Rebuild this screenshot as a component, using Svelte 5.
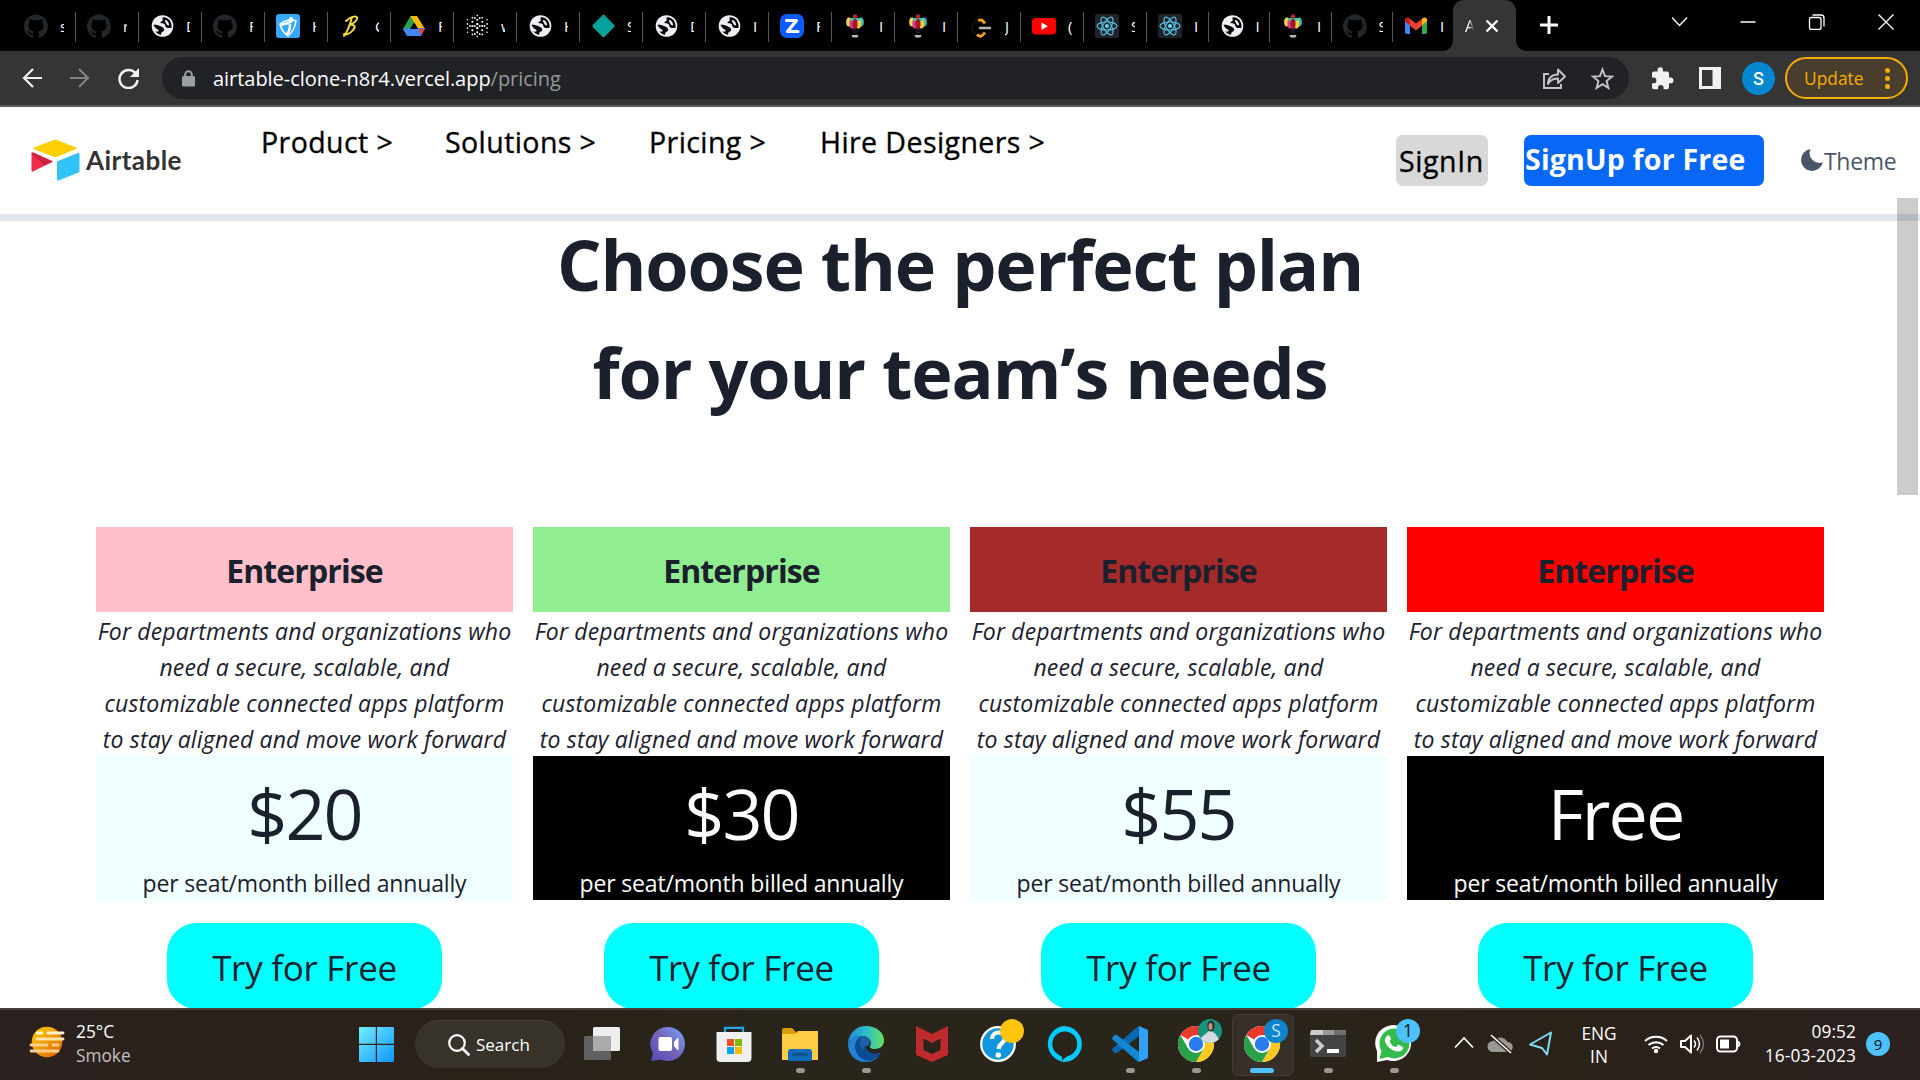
<script>
  const tabs = [
    ['github', 's'], ['github', 'r'], ['globe', 'D'], ['github', 'F'], ['jump', 'H'], ['bee', 'C'],
    ['drive', 'F'], ['dots', 'w'], ['globe', 'H'], ['diamond', 'S'], ['globe', 'D'], ['globe', 'I'],
    ['zed', 'F'], ['balloon', 'I'], ['balloon', 'I'], ['leet', 'J'], ['youtube', '('], ['react', 'S'],
    ['react', 'I'], ['globe', 'I'], ['balloon', 'I'], ['github', 'S'], ['gmail', 'I']
  ];
  const nav = ['Product >', 'Solutions >', 'Pricing >', 'Hire Designers >'];
  const plans = [
    { tone: 'pink', price: '$20', dark: false },
    { tone: 'green', price: '$30', dark: true },
    { tone: 'brown', price: '$55', dark: false },
    { tone: 'red', price: 'Free', dark: true }
  ];
  const apps = [
    ['taskview', ''], ['chat', ''], ['store', ''], ['folder', 'open'], ['edge', 'open'], ['mcafee', ''],
    ['help', ''], ['alexa', ''], ['vscode', 'open'], ['chromeA', 'open'], ['chromeS', 'active'],
    ['terminal', 'open'], ['whatsapp', 'open']
  ];
  // Staggered dot lattice that fades toward the rim.
  const dots = [];
  for (let c = 0; c < 5; c++) {
    const rows = [4, 5, 6, 5, 4][c];
    for (let r = 0; r < rows; r++) {
      const x = 2.500 + c * 4.900;
      const y = 12 + (r - (rows - 1) / 2) * 4.200;
      dots.push([x, y, 1.350 - Math.hypot(x - 12.300, y - 12) * 0.050]);
    }
  }
</script>

{#snippet favicon(name)}
  <svg class="fav" viewBox="0 0 24 24">
    {#if name === 'github'}
      <path fill="#22272c" d="M12 .5C5.4.5 0 5.800 0 12.400c0 5.300 3.400 9.700 8.200 11.300.6.1.8-.3.8-.6v-2.300c-3.300.7-4-1.400-4-1.400-.6-1.400-1.400-1.800-1.400-1.800-1-.7.1-.7.1-.7 1.200.1 1.900 1.200 1.900 1.200 1.100 1.900 2.800 1.300 3.500 1 .1-.8.4-1.300.8-1.600-2.700-.3-5.500-1.300-5.500-5.900 0-1.300.5-2.400 1.200-3.200-.1-.3-.5-1.500.1-3.200 0 0 1-.3 3.300 1.200a11.500 11.500 0 0 1 6 0c2.300-1.500 3.300-1.200 3.300-1.200.7 1.700.2 2.900.1 3.200.8.8 1.200 1.900 1.200 3.200 0 4.600-2.800 5.600-5.500 5.900.4.4.8 1.100.8 2.200v3.400c0 .3.2.7.8.6A12 12 0 0 0 24 12.400C24 5.800 18.600.5 12 .5z" />
    {:else if name === 'globe'}
      <circle cx="12.500" cy="12" r="10.800" fill="#eff0f3" />
      <path fill="#0a0a0c" d="M12.500 3.400c3.500-.4 6.500 1.400 8 4.300 1 2 1.400 4.300.9 6.200-2 .4-4.400.3-5.600-1-.9-1-.6-2.600-1.800-3.100-1.300-.5-3.300.3-3.500-1-.2-1.200 1.700-1 2.200-2.200.3-.9-.4-2-.2-3.200z" />
      <path fill="#eff0f3" d="M15.500 6c1.700.4 3.500 2.400 3.700 5.200-1.600.3-2.500-.4-3-1.700-.4-1.300-1.300-1.800-1.500-2.400z" />
      <path fill="#0a0a0c" d="M3.400 10.800c2.500-.4 5 .2 7.300 1.400 2 .9 3.700 2.100 3.500 3.700-.2 1.500-2.300 1.500-2.700 2.600-.2.9-.3 1.800-.8 2.500-2.200-.6-4.200-2-5.400-3.700 1.700.5 3 .5 3.300-.5.300-1.300-1.600-1.500-2.600-2.300C4.900 13.600 4 12.300 3.400 10.800z" />
    {:else if name === 'jump'}
      <rect width="24" height="24" rx="3" fill="#37a9fb" />
      <path d="M4 10c4-4 12-5 16-3-1 6-3 11-8 15-4-3-7-7-8-12z" fill="none" stroke="#fff" stroke-width="1.500" />
      <path d="M5 11c5-2 10-1 12-6M14 10c0 5-1 9-4 11" fill="none" stroke="#fff" stroke-width="2.500" /><circle cx="15" cy="5" r="2" fill="#fff" />
    {:else if name === 'bee'}
      <path d="M13 3C11 11 9 17 5 22M7 7c5-5 12-6 11-2-1 3-5 5-8 6 6-1 7 2 4 5-3 4-7 5-9 4" fill="none" stroke="#f6dc3b" stroke-width="2" stroke-linecap="round" />
    {:else if name === 'drive'}
      <path fill="#2ba24c" d="M8.500 2h4l2.500 4L5 21l-4-6z" /><path fill="#ffba00" d="M8.500 2H15l8 13h-7z" /><path fill="#4285f4" d="M5 14h18l-4 8H5l-4-7z" /><path fill="#ea4335" d="M16.500 15H23l-4 6z" /><path fill="#000" d="M12 8.500l4 6.500H8z" />
    {:else if name === 'dots'}
      {#each dots as [x, y, r]}<circle cx={x} cy={y} {r} fill="#fff" />{/each}
      {#each [[4.900, 12], [9.800, 12], [14.700, 12], [19.600, 12], [9.800, 4], [14.700, 4], [9.800, 20], [14.700, 20]] as [x, y]}<circle cx={x} cy={y} r="0.900" fill="#fff" />{/each}
    {:else if name === 'diamond'}
      <path fill="#05a19d" d="M12.500.5c.5 0 1 .3 1.400.9l9.300 9.700c.5.600.5 1.200 0 1.800l-9.300 9.700c-.8 1-2 1-2.800 0L1.800 12.900c-.5-.6-.5-1.200 0-1.800l9.300-9.700c.4-.6.9-.9 1.400-.9z" />
    {:else if name === 'zed'}
      <rect width="24" height="24" rx="7" fill="#0b5cff" /><path d="M6.500 6.500h10L7.500 17.500h10.500" fill="none" stroke="#fff" stroke-width="3.200" stroke-linejoin="round" stroke-linecap="round" />
    {:else if name === 'balloon'}
      <path d="M6 12l5 8h2l5-8z" fill="#15121f" />
      <ellipse cx="6" cy="8" rx="2.800" ry="4.500" fill="#f5d94a" /><ellipse cx="18" cy="8" rx="2.800" ry="4.500" fill="#43bdb4" /><ellipse cx="9" cy="9.500" rx="2.600" ry="5" fill="#d93a92" /><ellipse cx="15.500" cy="9.500" rx="2.600" ry="5" fill="#f0cf3c" /><path d="M7 4h10l-1 3H8z" fill="#38c7bb" /><ellipse cx="12" cy="10" rx="2.600" ry="5" fill="#a81524" /><circle cx="12" cy="2.500" r="2.200" fill="#b5292d" /><path d="M8.500 21h7l-1 2.500h-5z" fill="#bbb" />
    {:else if name === 'leet'}
      <path d="M9 6.500c3-1 4-1 7 3M8 20.500c3 3 5 2 8-2" fill="none" stroke="#ffa116" stroke-width="2.800" /><path d="M11 14h10" stroke="#b3b3b3" stroke-width="2.400" stroke-linecap="round" /><path d="M12 1L4 10c-2 3-1 7 3 10" fill="none" stroke="#121212" stroke-width="2" />
    {:else if name === 'youtube'}
      <rect y="4" width="24" height="16.500" rx="3.500" fill="#f00" /><path fill="#fff" d="M9.500 8.500l6.300 3.700-6.300 3.700z" />
    {:else if name === 'react'}
      <rect width="24" height="24" rx="2" fill="#20232a" /><g fill="none" stroke="#53c1de" stroke-width="1.200"><ellipse cx="12" cy="12" rx="10" ry="4" /><ellipse cx="12" cy="12" rx="10" ry="4" transform="rotate(60 12 12)" /><ellipse cx="12" cy="12" rx="10" ry="4" transform="rotate(120 12 12)" /></g><circle cx="12" cy="12" r="2" fill="#61dafb" />
    {:else if name === 'gmail'}
      <path fill="#4285f4" d="M1 7l5 4v9H3c-1 0-2-1-2-2z" /><path fill="#34a853" d="M23 7l-5 4v9h3c1 0 2-1 2-2z" /><path fill="#ea4335" d="M5 4l7 5.500L19 4v7l-7 5.500L5 11z" /><path fill="#c5221f" d="M6 11L1 7.500V6c0-2 2-3.300 4-2l1 1z" /><path fill="#fbbc04" d="M18 11l5-3.500V6c0-2-2-3.300-4-2l-1 1z" />
    {/if}
  </svg>
{/snippet}

{#snippet chrome()}
  <circle cx="18" cy="18" r="18" fill="#fff" />
  <path d="M18 18L2.400 9A18 18 0 0 1 33.600 9z" fill="#e8392c" /><path d="M18 9h15.600A18 18 0 0 1 18 36l7.800-13.500z" fill="#fdc820" /><path d="M2.400 9L10.200 22.500 18 27l0 9A18 18 0 0 1 2.400 9z" fill="#2aa148" /><path d="M25.800 22.500L18 36l-5-8z" fill="#2aa148" />
  <circle cx="18" cy="18" r="9" fill="#fff" /><circle cx="18" cy="18" r="7.200" fill="#2b7cec" />
{/snippet}

{#snippet app(name)}
  <svg class="app-icon" viewBox="0 0 36 36">
    {#if name === 'taskview'}
      <rect y="10" width="27" height="24" rx="1.500" fill="#606060" /><rect x="9" y="1" width="27" height="24" rx="1.500" fill="#eee" /><path d="M9 10h18v15H9z" fill="#aaa" />
    {:else if name === 'chat'}
      <defs><linearGradient id="chatFill" x1="0" y1="1" x2="1" y2="0"><stop stop-color="#5547bd" /><stop offset=".5" stop-color="#7465b6" /><stop offset="1" stop-color="#75a7ff" /></linearGradient></defs>
      <path d="M18 1a17 17 0 1 1-7 32.500L2 35c-1 0-1-1-.6-1.700L3 27A17 17 0 0 1 18 1z" fill="url(#chatFill)" /><rect x="8.500" y="11" width="13.500" height="14" rx="2" fill="#fff" /><path d="M24 16l3.500-4c.6-.5 1 0 1 .6v10.800c0 .6-.4 1-1 .6L24 20z" fill="#fff" />
    {:else if name === 'store'}
      <path d="M9 7V1.800h18V7" fill="none" stroke="#23a7e8" stroke-width="2.200" /><path d="M0.500 6h35v26a4 4 0 0 1-4 4h-27a4 4 0 0 1-4-4z" fill="#efefef" /><path d="M11 13h7v7h-7z" fill="#f25022" /><path d="M19 13h7v7h-7z" fill="#7fba00" /><path d="M11 21h7v7h-7z" fill="#00a4ef" /><path d="M19 21h7v7h-7z" fill="#ffb900" />
    {:else if name === 'folder'}
      <path d="M0 4a2 2 0 0 1 2-2h8l4 4v4H0z" fill="#dc9b05" /><path d="M0 8h13l3-3h20v29H0z" fill="#fdcd46" /><path d="M6 35V26a3 3 0 0 1 3-3h18a3 3 0 0 1 3 3v9z" fill="#0e6dbb" /><path d="M11 28.500h14" stroke="#06437e" stroke-width="2" stroke-linecap="round" />
    {:else if name === 'edge'}
      <defs><linearGradient id="edgeTop"><stop stop-color="#1d8bd5" /><stop offset=".5" stop-color="#2cbccc" /><stop offset="1" stop-color="#65e05f" /></linearGradient></defs>
      <path d="M0 17C1 6 9 0 18 0c11 0 18 7 18 14 0 6-4 9-9 9-5 0-6-2-4.500-4C24 16 21 10 14 10 7 10 2 13 0 17z" fill="url(#edgeTop)" /><path d="M0 17c3-6 9-8 14-7-7 3-9 12-4 18 5 6 14 6 21 2-4 5-9 6-13 6C7 36-.5 28 0 17z" fill="#2182d4" /><path d="M14 10c3 0 6 2 7 5-5 2-5 9 3 12 4 1 7 0 9-1-4 10-17 12-23 3-5-7-3-15 4-19z" fill="#0b4b94" /><path d="M14 10c4 0 8 3 8 7l-2 3c-4 0-5 2-4 4-5-4-6-9-2-14z" fill="#1a62a8" />
    {:else if name === 'mcafee'}
      <path d="M2 0l16 8L34 0v29l-16 7-16-7z" fill="#bf2a2c" /><path d="M9.500 12.500L18 17l8.500-4.500V24L18 28l-8.500-4z" fill="#29241a" />
    {:else if name === 'help'}
      <circle cx="18" cy="18" r="16.800" fill="#0f96dc" stroke="#fff" stroke-width="2.200" /><path d="M12 13c0-9 13-8 13-1 0 5-6 5-6.500 11" fill="none" stroke="#fff" stroke-width="4.200" /><circle cx="18.300" cy="29" r="2.700" fill="#fff" /><circle cx="32" cy="5" r="12" fill="#ffc30b" />
    {:else if name === 'alexa'}
      <path fill-rule="evenodd" fill="#02cafc" d="M18 0a18 18 0 1 1-2 35.900V32C17 31 15 30 13 29a12.500 12.500 0 1 1 9 1c-2 1-4 2-6 5.500A18 18 0 0 1 18 0z" />
    {:else if name === 'vscode'}
      <path d="M27 0l9 4v28l-9 4z" fill="#2fa0f3" /><path d="M27 0v10L5 27c-1 .5-2 .3-3-.5l-1.500-2c-.6-.8-.5-1.500.2-2L25 1z" fill="#0c66ae" /><path d="M27 36V26L5 9c-1-.5-2-.3-3 .5L.5 11.500c-.6.8-.5 1.500.2 2L25 35z" fill="#1487d4" />
    {:else if name === 'chromeA'}
      {@render chrome()}<circle cx="32" cy="5" r="12" fill="#15937e" /><path d="M22.500 12l6-5 4-3 5 4 3.500 5a12 12 0 0 1-18.500-1z" fill="#d3dce0" /><ellipse cx="33" cy="0" rx="3.600" ry="5.500" fill="#3b2827" /><ellipse cx="32.500" cy="0.500" rx="2" ry="3.500" fill="#c29280" />
    {:else if name === 'chromeS'}
      {@render chrome()}<circle cx="32" cy="5" r="12" fill="#0d85cc" />
    {:else if name === 'terminal'}
      <rect y="4" width="36" height="27" rx="1.500" fill="#424345" /><path d="M1 4h12v5H0z" fill="#ccc" /><path d="M13 4h11v5H13z" fill="#999" /><path d="M24 4h12v5H24z" fill="#6f6f6f" /><path d="M6 14l6 6-6 6" fill="none" stroke="#ccc" stroke-width="3.500" /><path d="M17 25h12" stroke="#fff" stroke-width="4" />
    {:else if name === 'whatsapp'}
      <path d="M1 36V25A18 18 0 1 1 11 34z" fill="#fff" /><path d="M3.500 33l2-8A15 15 0 1 1 12 31z" fill="#35bb4b" /><path d="M10 11c2-3 4-2 5 2 0 1-2 2-1 3 1 3 4 5 6 5 1 0 2-3 3-2 5 2 5 3 3 5-4 4-15-1-17-9 0-2 0-3 1-4z" fill="#fff" /><circle cx="32" cy="5" r="12" fill="#4cc2ff" />
    {/if}
  </svg>
  {#if name === 'chromeS'}<span class="badge pale">S</span>{/if}
  {#if name === 'whatsapp'}<span class="badge">1</span>{/if}
{/snippet}

<div class="screen">
  <div class="tabstrip">
    <div class="tabs">
      {#each tabs as [icon, label], i}
        <div class={['tab', i > 17 && 'narrow', i === 22 && 'last']}>{@render favicon(icon)}<span>{label}</span></div>
      {/each}
      <div class="tab-active">
        <span>A</span>
        <svg width="14" height="14" viewBox="0 0 14 14"><path d="M1.500 1.500l11 11m0-11l-11 11" stroke="#fff" stroke-width="2.400" /></svg>
      </div>
      <svg class="plus" width="18" height="18" viewBox="0 0 18 18"><path d="M9 1v16M1 9h16" stroke="#fff" stroke-width="3" stroke-linecap="round" /></svg>
    </div>
    <svg class="winctl" width="222" height="16" viewBox="0 0 222 16" fill="none" stroke="#fff" stroke-width="1.300">
      <path d="M0 3.500l7.500 8 7.500-8M68.500 8h15M206.500.5l15 15m0-15l-15 15" /><rect x="137.500" y="3.500" width="11.500" height="12" rx="2" /><path d="M140.500 1h8.500a3 3 0 0 1 3 3v8.500" />
    </svg>
  </div>

  <div class="toolbar">
    <svg class="navicons" width="118" height="22" viewBox="0 0 118 22" fill="none" stroke-width="2.200">
      <path d="M20 11H2m9-9l-9 9 9 9" stroke="#f1f1f1" /><path d="M48 11h18m-9-9l9 9-9 9" stroke="#828282" /><path d="M114 7a9 9 0 1 0 1.500 6" stroke="#f1f1f1" stroke-width="2.500" /><path d="M117 1v9h-9z" fill="#f1f1f1" />
    </svg>
    <div class="omnibox">
      <svg width="13" height="17" viewBox="0 0 13 17"><rect y="6" width="13" height="10.500" rx="1.500" fill="#9aa0a6" /><path d="M3.200 7V4.500a3.300 3.300 0 0 1 6.600 0V7" fill="none" stroke="#9aa0a6" stroke-width="2" /></svg>
      <p class="url">airtable-clone-n8r4.vercel.app<span>/pricing</span></p>
      <svg class="share" width="71" height="24" viewBox="0 0 71 24" fill="none" stroke="#c3c5c8" stroke-width="1.900">
        <path d="M6 8H1v14h17v-4" /><path d="M5 18c0-6 4-9.500 10-9.500V3.500l7 7-7 6.500v-4.500c-4 0-7.500 1-10 5.500z" stroke-linejoin="round" /><path d="M59.500 3.500l2.500 6.700 7 .4-5.400 4.500 1.800 6.900-5.900-3.900-5.900 3.900 1.800-6.900L50 10.600l7-.4z" />
      </svg>
    </div>
    <svg class="puzzle" width="23" height="23" viewBox="0 0 23 23"><path fill="#f1f1f1" d="M19.500 10.500H18V6.500a2 2 0 0 0-2-2h-4V3a2.700 2.700 0 0 0-5.400 0v1.500H3a2 2 0 0 0-2 2v4h1.500a2.900 2.900 0 0 1 0 5.800H1v4a2 2 0 0 0 2 2h4v-1.500a2.800 2.800 0 0 1 5.600 0v1.500H16a2 2 0 0 0 2-2v-4h1.500a2.900 2.900 0 0 0 0-5.800z" /></svg>
    <svg class="panel" width="22" height="22" viewBox="0 0 22 22"><path fill="#f1f1f1" fill-rule="evenodd" d="M0 0h22v22H0zM3 3v16h10.500V3z" /></svg>
    <span class="avatar">S</span>
    <div class="update"><span>Update</span><i></i></div>
  </div>

  <main>
    <header>
      <svg class="logo" width="49" height="42" viewBox="0 0 49 42"><path fill="#fecd02" d="M3 8.500L22 1.200c1.500-.6 3-.6 4.500 0L45 8.500c1 .5 1 1.200 0 1.600L26.500 17.500c-1.500.7-3 .7-4.500 0L3 10.200c-1-.5-1-1.200 0-1.700z" /><path fill="#f02b48" d="M.5 14.500c0-1 .5-1.300 1.500-1l20 9L2 32.500c-1 .4-1.500 0-1.500-.8z" /><path fill="#c9213f" d="M2 13.500l20 9-8 3.800L.5 14.500z" /><path fill="#30c3f7" d="M26 23.500c0-.8.300-1.200 1-1.500l20-8c1-.3 1.500 0 1.500 1v17.200c0 .7-.3 1-1 1.300l-20 8c-1 .4-1.500 0-1.500-1z" /></svg>
      <span class="brand">Airtable</span>
      <nav>{#each nav as item, i}<a class="n{i}">{item}</a>{/each}</nav>
      <button class="signin">SignIn</button>
      <button class="signup">SignUp for Free</button>
      <svg class="moon" width="22" height="22" viewBox="0 0 22 22"><path fill="#4a5568" d="M9.500 0A11 11 0 1 0 21.800 13.200 9.800 9.800 0 0 1 9.500 0z" /></svg>
      <span class="theme">Theme</span>
    </header>
    <h1>Choose the perfect plan<br />for your team’s needs</h1>
    <section class="plans">
      {#each plans as plan}
        <article>
          <h2 class={plan.tone}>Enterprise</h2>
          <p class="desc">For departments and organizations who<br />need a secure, scalable, and<br />customizable connected apps platform<br />to stay aligned and move work forward</p>
          <div class={['price', plan.dark && 'dark']}><strong>{plan.price}</strong><span>per seat/month billed annually</span></div>
          <button class="try">Try for Free</button>
        </article>
      {/each}
    </section>
    <div class="scroll"></div>
  </main>

  <footer>
    <svg class="weather" width="36" height="32" viewBox="0 0 36 32"><defs><linearGradient id="sun" x1="0" y1="0" x2="1" y2="1"><stop stop-color="#ffd000" /><stop offset="1" stop-color="#e25f08" /></linearGradient></defs><circle cx="18" cy="16" r="15.300" fill="url(#sun)" /><g stroke-width="2.800" stroke-linecap="round"><path d="M8 7h5M19 7h15" stroke="#fff1c8" /><path d="M8 13h26" stroke="#ffe3a8" /><path d="M2 19h16M24 19h5M2 25h27" stroke="#f5ce8e" /></g></svg>
    <div class="forecast">25°C<br /><span>Smoke</span></div>
    <svg class="start" width="35" height="35" viewBox="0 0 35 35"><defs><linearGradient id="win" x1="0" y1="0" x2="1" y2="1"><stop stop-color="#72efff" /><stop offset="1" stop-color="#0f95ff" /></linearGradient></defs><path fill="url(#win)" d="M0 1a1 1 0 0 1 1-1h15.800v16.800H0zM18 0h16a1 1 0 0 1 1 1v15.800H18zM0 18h16.800v17H1a1 1 0 0 1-1-1zM18 18h17v16a1 1 0 0 1-1 1H18z" /></svg>
    <div class="search"><svg width="22" height="22" viewBox="0 0 22 22" fill="none" stroke="#fff" stroke-width="2.200"><circle cx="9" cy="9" r="7.800" /><path d="M14.500 14.500l6 6" stroke-width="2.800" stroke-linecap="round" /></svg><span>Search</span></div>
    <div class="apps">{#each apps as [name, state]}<div class="app {state}">{@render app(name)}<i></i></div>{/each}</div>
    <svg class="tray" width="100" height="26" viewBox="0 0 100 26" fill="none" stroke="#fff" stroke-width="1.600"><path d="M1 16.500L10 7l9 9.500" /><path d="M39 21a5.500 5.500 0 0 1 0-11 8.500 8.500 0 0 1 14.500 1A5 5 0 0 1 54 21z" fill="#9a9794" stroke="none" /><path d="M37 4l20 18" stroke="#29241a" stroke-width="4" /><path d="M37 4l20 18" /><path d="M97 1.500L76 13.500l12 3.500 5 6.500z" stroke="#7fdcf5" stroke-width="2" stroke-linejoin="round" /></svg>
    <div class="lang">ENG<br />IN</div>
    <svg class="status" width="98" height="24" viewBox="0 0 98 24" fill="none" stroke="#fff" stroke-width="2"><path d="M1 9a16.500 16.500 0 0 1 22 0M4.500 13a11.500 11.500 0 0 1 15 0M8 16.500a6.500 6.500 0 0 1 8 0" /><circle cx="12" cy="19" r="2.200" fill="#fff" stroke="none" /><path d="M37 9h4l6-5.500v17L41 15h-4z" stroke-linejoin="round" /><path d="M50 8.500q3 3.500 0 7M53 5.500q5 6.500 0 13" stroke-width="1.500" /><path d="M56 3q7 9 0 18" stroke="#77736d" stroke-width="1.500" /><rect x="73" y="4.500" width="20" height="15" rx="3.500" /><path d="M94 9.500q3 2.500 0 5" /><path d="M76 7.500h9v9h-9z" fill="#fff" stroke="none" /></svg>
    <div class="clock">09:52<br />16-03-2023</div>
    <span class="count">9</span>
  </footer>
</div>

<style>
  :global(body) { margin: 0; overflow: hidden; }
  * { box-sizing: border-box; }
  svg { display: block; flex: none; }
  .screen { width: 1920px; height: 1080px; display: flex; flex-direction: column; overflow: hidden; font-family: 'Open Sans', 'Noto Sans', sans-serif; color: #1a202c; background: #fff; }
  span, a, button, p { white-space: nowrap; }

  .tabstrip { height: 51px; flex: none; background: #000; display: flex; justify-content: space-between; padding-right: 26px; }
  .tabs { display: flex; padding-left: 13px; }
  .tab { width: 63px; height: 30px; margin-top: 12px; padding: 2px 0 0 11px; display: flex; border-right: 1px solid #5a5a5a; flex: none; }
  .tab.narrow { width: 61.5px; }
  .tab.last { width: 60px; border: 0; }
  .fav { width: 24px; height: 24px; }
  .tab span { width: 4px; margin-left: 12px; overflow: hidden; color: #fff; font-size: 15px; line-height: 24px; }
  .tab-active { position: relative; width: 63px; height: 51px; background: #353535; border-radius: 11px 11px 0 0; display: flex; align-items: center; padding-left: 12px; color: #fff; }
  .tab-active::before, .tab-active::after { content: ''; position: absolute; bottom: 0; width: 10px; height: 10px; }
  .tab-active::before { left: -10px; background: radial-gradient(circle at 0 0, transparent 9.500px, #353535 10px); }
  .tab-active::after { right: -10px; background: radial-gradient(circle at 100% 0, transparent 9.500px, #353535 10px); }
  .tab-active span { width: 9px; overflow: hidden; font-size: 16px; margin-right: 11px; mask-image: linear-gradient(90deg, #000 40%, transparent); }
  .plus { margin: 16px 0 0 24px; }
  .winctl { margin-top: 14px; }

  .toolbar { height: 56px; flex: none; background: #353535; border-bottom: 2px solid #5f5f5f; display: flex; align-items: center; padding: 0 12px 0 22px; }
  .omnibox { width: 1467px; height: 42px; margin-left: 22px; border-radius: 21px; background: #212226; display: flex; align-items: center; padding-left: 20px; }
  .url { margin: 0 0 0 18px; color: #fff; font-size: 20px; letter-spacing: -0.040px; }
  .url span { color: #96989b; }
  .share { margin: 0 15px 0 auto; }
  .puzzle { margin-left: 22px; }
  .panel { margin-left: 25px; }
  .avatar { width: 33px; height: 33px; margin-left: 21px; border-radius: 50%; background: #0288d1; color: #fff; font: 500 18px/33px Roboto, sans-serif; text-align: center; }
  .update { width: 123px; height: 42px; margin-left: auto; border: 2px solid #f9ab00; border-radius: 21px; background: #493e2e; display: flex; align-items: center; padding-left: 17px; color: #f9ab00; font-size: 17.400px; }
  .update i { width: 5px; height: 5px; margin-left: 21px; border-radius: 50%; background: #f9ab00; box-shadow: 0 -8px #f9ab00, 0 8px #f9ab00; }

  main { position: relative; height: 901px; flex: none; overflow: hidden; }
  header { height: 114px; border-bottom: 7px solid #e2e8f0; display: flex; align-items: flex-start; padding-left: 31px; }
  .logo { margin-top: 32px; }
  .brand { width: 176px; padding: 38px 0 0 6px; font: 700 26px/30px Lato, sans-serif; color: #333; letter-spacing: 0.450px; }
  nav { display: flex; width: 1140px; padding: 17px 0 0 5px; color: #000; font-size: 28.500px; line-height: 37px; letter-spacing: 0.420px; -webkit-text-stroke: 0.350px #000; }
  nav a { flex: none; }
  .n0 { width: 184px; } .n1 { width: 204px; } .n2 { width: 171px; }
  button { border: 0; padding: 0; font-family: inherit; text-align: left; }
  .signin { width: 92px; height: 51px; margin-top: 28px; padding: 1px 0 0 3px; border-radius: 7px; background: #d8d8d8; color: #000; font-size: 28.500px; letter-spacing: 0.600px; -webkit-text-stroke: 0.350px #000; }
  .signup { width: 240px; height: 51px; margin: 28px 0 0 36px; padding: 0 0 3px 1px; border-radius: 7px; background: #0768f8; color: #fff; font-size: 28.500px; letter-spacing: 0.200px; font-weight: 700; }
  .moon { margin: 42px 0 0 37px; }
  .theme { margin: 36px 0 0 1px; color: #4a5568; font-size: 23px; line-height: 36px; letter-spacing: -0.300px; }
  h1 { margin: -11px 0 101px; font-size: 70px; line-height: 108px; font-weight: 700; text-align: center; letter-spacing: -1.120px; }
  .plans { display: grid; grid-template-columns: repeat(4, 417px); gap: 20px; padding-left: 96px; }
  article { display: flex; flex-direction: column; align-items: center; }
  h2 { width: 100%; height: 85px; margin: 0; font-size: 32px; line-height: 88px; font-weight: 700; text-align: center; letter-spacing: -0.900px; }
  .pink { background: #ffc0cb; } .green { background: #90ee90; } .brown { background: #a52a2a; } .red { background: #f00; }
  .desc { height: 144px; margin: 0; padding-top: 1px; font-size: 23px; line-height: 36px; letter-spacing: 0.160px; font-style: italic; text-align: center; }
  .price { width: 100%; height: 144px; padding-top: 4px; background: #f0ffff; display: flex; flex-direction: column; align-items: center; }
  .price strong { font-size: 70px; line-height: 107px; font-weight: 400; letter-spacing: -1.900px; }
  .price span { margin-top: -2px; font-size: 23px; line-height: 36px; letter-spacing: -0.160px; }
  .dark { background: #000; color: #fff; }
  .try { width: 275px; height: 86px; margin-top: 23px; padding-top: 2px; border-radius: 30px; background: #0ff; color: #1a202c; font-size: 35px; letter-spacing: -0.280px; text-align: center; }
  .scroll { position: absolute; left: 1897px; top: 91px; width: 21px; height: 297px; background: rgba(0, 0, 0, 0.2); }

  footer { height: 72px; flex: none; display: flex; border-top: 2px solid #46413b; background: linear-gradient(90deg, #2b211e, #2a2119 25%, #29251b 42%, #29251b 62%, #2a2119 82%, #2b211f); color: #fff; font-size: 17.300px; line-height: 24px; padding-left: 29px; }
  .weather { margin-top: 16px; }
  .forecast { width: 283px; padding: 10px 0 0 11px; }
  .forecast span { color: #c5c2c0; }
  .start { margin: 17px 21px 0 11px; }
  .search { width: 150px; height: 48px; margin-top: 10px; border-radius: 24px; background: #37332b; border-top: 1px solid #454137; display: flex; align-items: center; padding-left: 33px; }
  .search span { margin-left: 6px; font-size: 17px; }
  .apps { display: flex; margin-left: 4px; }
  .app { position: relative; width: 66px; height: 70px; display: flex; flex-direction: column; align-items: center; }
  .app-icon { width: 36px; height: 36px; margin-top: 16px; overflow: visible; z-index: 1; }
  .app i { width: 9px; height: 5px; margin-top: 6px; border-radius: 3px; z-index: 1; }
  .open i { background: #999693; }
  .active i { width: 24px; background: #4cc2ff; }
  .active::before { content: ''; position: absolute; left: 3px; top: 4px; width: 60px; height: 60px; border-radius: 6px; background: #373029; border: 1px solid #423b33; }
  .badge { position: absolute; left: 35px; top: 9px; width: 24px; color: #111; text-align: center; z-index: 2; }
  .pale { color: #c9e4f4; }
  .tray { margin: 21px 0 0 27px; }
  .lang { width: 60px; margin-left: 15px; padding-top: 12px; line-height: 23px; text-align: center; }
  .status { margin: 22px 0 0 15px; }
  .clock { width: 114px; padding-top: 10px; text-align: right; letter-spacing: 0.100px; }
  .count { width: 24px; height: 24px; margin: 22px 0 0 10px; border-radius: 50%; background: #4cc2ff; color: #111; font-size: 15px; text-align: center; }
</style>
